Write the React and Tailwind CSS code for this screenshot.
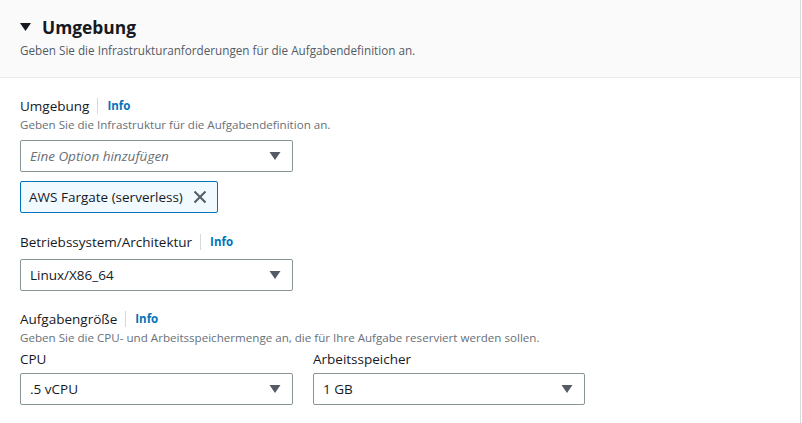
const Caret = () => (
  <svg width="12" height="10" viewBox="0 0 12 10" className="shrink-0">
    <path d="M0.5 1 L11.5 1 L6 9 Z" fill="#545b64" />
  </svg>
);

const InfoLabel = ({ children }) => (
  <div className="flex items-center text-[13.5px] leading-[20px] text-[#16191f]">
    <span>{children}</span>
    <span className="ml-[8px] mr-[9px] h-[16px] w-px bg-[#d5dbdb]" />
    <span className="text-[11.5px] font-bold text-[#0073bb]">Info</span>
  </div>
);

const Select = ({ value, placeholder, className = '' }) => (
  <div className={`flex h-[32px] items-center justify-between rounded-[2px] border border-[#879596] bg-white pl-[9px] pr-[11px] text-[13.5px] ${className}`}>
    {placeholder ? (
      <span className="italic text-[#687078]">{placeholder}</span>
    ) : (
      <span className="text-[#16191f]">{value}</span>
    )}
    <Caret />
  </div>
);

const Hint = ({ children }) => (
  <div className="mt-[1px] text-[11.6px] leading-[16px] text-[#687078]">{children}</div>
);

export default function App() {
  return (
    <div className="h-[423px] w-[802px] overflow-hidden bg-white" style={{ fontFamily: '"Open Sans", "Noto Sans", sans-serif' }}>
      <div className="h-full w-[801px] border-r border-[#d5dbdb]">
        <div className="h-[78px] border-b border-[#eaeded] bg-[#fafafa] px-[20px] pt-[14px]">
          <div className="flex items-center gap-[11px]">
            <svg width="11" height="10" viewBox="0 0 11 10">
              <path d="M0 1 L11 1 L5.5 9 Z" fill="#16191f" />
            </svg>
            <h2 className="text-[17.4px] font-bold leading-[26px] text-[#16191f]">Umgebung</h2>
          </div>
          <div className="mt-[2px] text-[11.7px] leading-[16px] text-[#545b64]">
            Geben Sie die Infrastrukturanforderungen für die Aufgabendefinition an.
          </div>
        </div>

        <div className="px-[20px] pt-[18px]">
          <InfoLabel>Umgebung</InfoLabel>
          <Hint>Geben Sie die Infrastruktur für die Aufgabendefinition an.</Hint>
          <Select className="mt-[7px] w-[273px]" placeholder="Eine Option hinzufügen" />
          <div className="mt-[9px] inline-flex h-[32px] items-center gap-[9px] rounded-[2px] border border-[#0073bb] bg-[#f1faff] pl-[8px] pr-[9px] text-[13.5px] text-[#16191f]">
            <span>AWS Fargate (serverless)</span>
            <svg width="16" height="16" viewBox="0 0 16 16">
              <path d="M2.5 2.5 L13.5 13.5 M13.5 2.5 L2.5 13.5" stroke="#545b64" strokeWidth="2" fill="none" />
            </svg>
          </div>

          <div className="mt-[19px]">
            <InfoLabel>Betriebssystem/Architektur</InfoLabel>
            <Select className="mt-[7px] w-[273px]" value="Linux/X86_64" />
          </div>

          <div className="mt-[18px]">
            <InfoLabel>Aufgabengröße</InfoLabel>
            <Hint>Geben Sie die CPU- und Arbeitsspeichermenge an, die für Ihre Aufgabe reserviert werden sollen.</Hint>
            <div className="mt-[3px] flex gap-[20px]">
              <div className="w-[273px]">
                <div className="text-[13.5px] leading-[20px] text-[#16191f]">CPU</div>
                <Select className="mt-[4px]" value=".5 vCPU" />
              </div>
              <div className="w-[272px]">
                <div className="text-[13.5px] leading-[20px] text-[#16191f]">Arbeitsspeicher</div>
                <Select className="mt-[4px]" value="1 GB" />
              </div>
            </div>
          </div>
        </div>
      </div>
    </div>
  );
}
